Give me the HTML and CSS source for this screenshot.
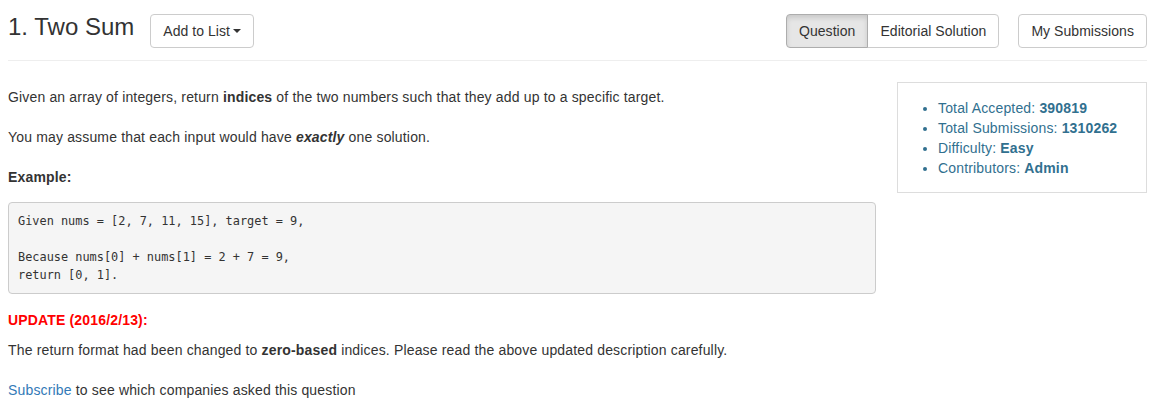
FILE: index.html
```html
<!DOCTYPE html>
<html>
<head>
<meta charset="utf-8">
<link rel="stylesheet" href="styles.css">
</head>
<body>
<div class="page">
  <div class="header">
    <h3 class="title">1. Two Sum</h3>
    <button class="btn">Add to List<span class="caret"></span></button>
    <div class="spacer"></div>
    <div class="btn-group">
      <button class="btn active">Question</button>
      <button class="btn">Editorial Solution</button>
    </div>
    <button class="btn subs">My Submissions</button>
  </div>
  <div class="content">
    <div class="main">
      <p class="p1">Given an array of integers, return <b>indices</b> of the two numbers such that they add up to a specific target.</p>
      <p class="p1">You may assume that each input would have <b><i>exactly</i></b> one solution.</p>
      <p class="ex"><b>Example:</b></p>
      <pre class="code">Given nums = [2, 7, 11, 15], target = 9,

Because nums[0] + nums[1] = 2 + 7 = 9,
return [0, 1].</pre>
      <p class="update"><b>UPDATE (2016/2/13):</b></p>
      <p class="ret">The return format had been changed to <b>zero-based</b> indices. Please read the above updated description carefully.</p>
      <p class="sub"><a href="#" class="link">Subscribe</a> to see which companies asked this question</p>
    </div>
    <div class="side">
      <ul class="stats">
        <li>Total Accepted: <b>390819</b></li>
        <li>Total Submissions: <b>1310262</b></li>
        <li>Difficulty: <b>Easy</b></li>
        <li>Contributors: <b>Admin</b></li>
      </ul>
    </div>
  </div>
</div>
</body>
</html>
```

FILE: styles.css
```css
* { box-sizing: border-box; }
body {
  margin: 0;
  font-family: "Liberation Sans", Arial, sans-serif;
  font-size: 14px;
  line-height: 20px;
  letter-spacing: 0.16px;
  color: #333;
  background: #fff;
}
.page {
  padding: 0 16px 0 8px;
}
.header {
  display: flex;
  align-items: center;
  padding-top: 14px;
  padding-bottom: 12px;
  border-bottom: 1px solid #eee;
}
.title {
  margin: 0 16px 0 0;
  font-size: 24px;
  font-weight: 500;
  line-height: 26px;
  letter-spacing: 0;
  position: relative;
  top: -4px;
}
.btn {
  font-family: "Liberation Sans", Arial, sans-serif;
  font-size: 14px;
  line-height: 20px;
  letter-spacing: 0.05px;
  height: 34px;
  padding: 6px 12px;
  color: #333;
  background: #fff;
  border: 1px solid #ccc;
  border-radius: 4px;
  display: inline-flex;
  align-items: center;
}
.caret {
  display: inline-block;
  width: 0;
  height: 0;
  margin-left: 3px;
  border-top: 4px solid #333;
  border-left: 4px solid transparent;
  border-right: 4px solid transparent;
}
.spacer { flex: 1; }
.btn-group { display: flex; }
.btn-group .btn:first-child {
  border-top-right-radius: 0;
  border-bottom-right-radius: 0;
}
.btn-group .btn:last-child {
  border-top-left-radius: 0;
  border-bottom-left-radius: 0;
  margin-left: -1px;
}
.btn.active {
  background: #e6e6e6;
  border-color: #adadad;
  box-shadow: inset 0 3px 5px rgba(0,0,0,.125);
  position: relative;
}
.subs { margin-left: 19px; }
.content {
  display: flex;
  gap: 21px;
}
.main {
  width: 868px;
  padding-top: 26px;
}
.main p { margin: 0; }
.p1 { margin-bottom: 20px !important; }
.ex { margin-bottom: 15px !important; }
.code {
  margin: 0 0 16px;
  padding: 9px 9px;
  background: #f5f5f5;
  border: 1px solid #ccc;
  border-radius: 4px;
  font-family: "DejaVu Sans Mono", "Liberation Mono", monospace;
  font-size: 11.9px;
  line-height: 18px;
  letter-spacing: 0;
  color: #333;
}
.update { color: #f00; margin-bottom: 10px !important; }
.ret { margin-bottom: 20px !important; }
.link { color: #337ab7; text-decoration: none; }
.side {
  width: 250px;
  margin-top: 21px;
  align-self: flex-start;
  border: 1px solid #ddd;
  padding: 15px 0 14px;
}
.stats {
  margin: 0;
  padding-left: 40px;
  color: #31708f;
}
.stats li { line-height: 20px; }
```
